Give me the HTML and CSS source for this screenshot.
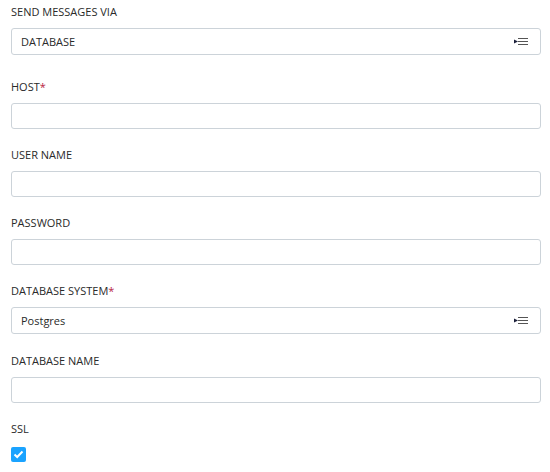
FILE: index.html
```html
<!DOCTYPE html>
<html lang="en">
<head>
    <meta charset="UTF-8">
    <meta name="viewport" content="width=device-width, initial-scale=1.0">
    <title>Send Messages</title>
    <link rel="stylesheet" href="styles.css">
</head>
<body>
    <form class="settings">
        <div class="field with-select first">
            <label>Send messages via</label>
            <div class="select">
                <span>DATABASE</span>
                <svg class="list-icon" width="14" height="9" viewBox="0 0 14 9">
                    <polygon points="0,2.5 4,4.5 0,6.5" fill="#1b1f3a"/>
                    <rect x="4" y="1" width="10" height="1" fill="#555"/>
                    <rect x="4" y="4" width="10" height="1" fill="#555"/>
                    <rect x="4" y="7" width="10" height="1" fill="#555"/>
                </svg>
            </div>
        </div>
        <div class="field">
            <label>Host<span class="req">*</span></label>
            <input type="text">
        </div>
        <div class="field">
            <label>User name</label>
            <input type="text">
        </div>
        <div class="field">
            <label>Password</label>
            <input type="password">
        </div>
        <div class="field with-select">
            <label>Database system<span class="req">*</span></label>
            <div class="select">
                <span>Postgres</span>
                <svg class="list-icon" width="14" height="9" viewBox="0 0 14 9">
                    <polygon points="0,2.5 4,4.5 0,6.5" fill="#1b1f3a"/>
                    <rect x="4" y="1" width="10" height="1" fill="#555"/>
                    <rect x="4" y="4" width="10" height="1" fill="#555"/>
                    <rect x="4" y="7" width="10" height="1" fill="#555"/>
                </svg>
            </div>
        </div>
        <div class="field">
            <label>Database name</label>
            <input type="text">
        </div>
        <div class="field">
            <label>SSL</label>
            <span class="checkbox">
                <svg width="11" height="9" viewBox="0 0 11 9">
                    <polyline points="1.5,4.5 4.2,7 9.5,1.5" fill="none" stroke="#fff" stroke-width="2"/>
                </svg>
            </span>
        </div>
    </form>
</body>
</html>
```
FILE: styles.css
```css
body {
    margin: 0;
    font-family: "Open Sans", Arial, sans-serif;
    font-size: 11px;
    color: #2a2a2a;
    background-color: #fff;
}
.settings {
    padding: 4px 9px 0 11px;
}
.field {
    display: flex;
    flex-direction: column;
    margin-bottom: 18px;
}
.field.with-select {
    margin-bottom: 19px;
}
.field.first {
    margin-bottom: 24px;
}
.field label {
    line-height: 16px;
    margin-bottom: 8px;
    text-transform: uppercase;
}
.req {
    color: #b8233f;
}
.field input {
    box-sizing: border-box;
    height: 26px;
    margin: 0;
    border: 1px solid #ccd3d9;
    border-radius: 3px;
    padding: 0 9px;
    font: inherit;
}
.select {
    box-sizing: border-box;
    height: 27px;
    display: flex;
    align-items: center;
    justify-content: space-between;
    border: 1px solid #ccd3d9;
    border-radius: 3px;
    padding: 0 12px 0 9px;
}
.list-icon {
    display: block;
}
.checkbox {
    width: 15px;
    height: 15px;
    margin-top: 2px;
    border-radius: 2px;
    background-color: #1aa3ff;
    display: flex;
    align-items: center;
    justify-content: center;
}
```
